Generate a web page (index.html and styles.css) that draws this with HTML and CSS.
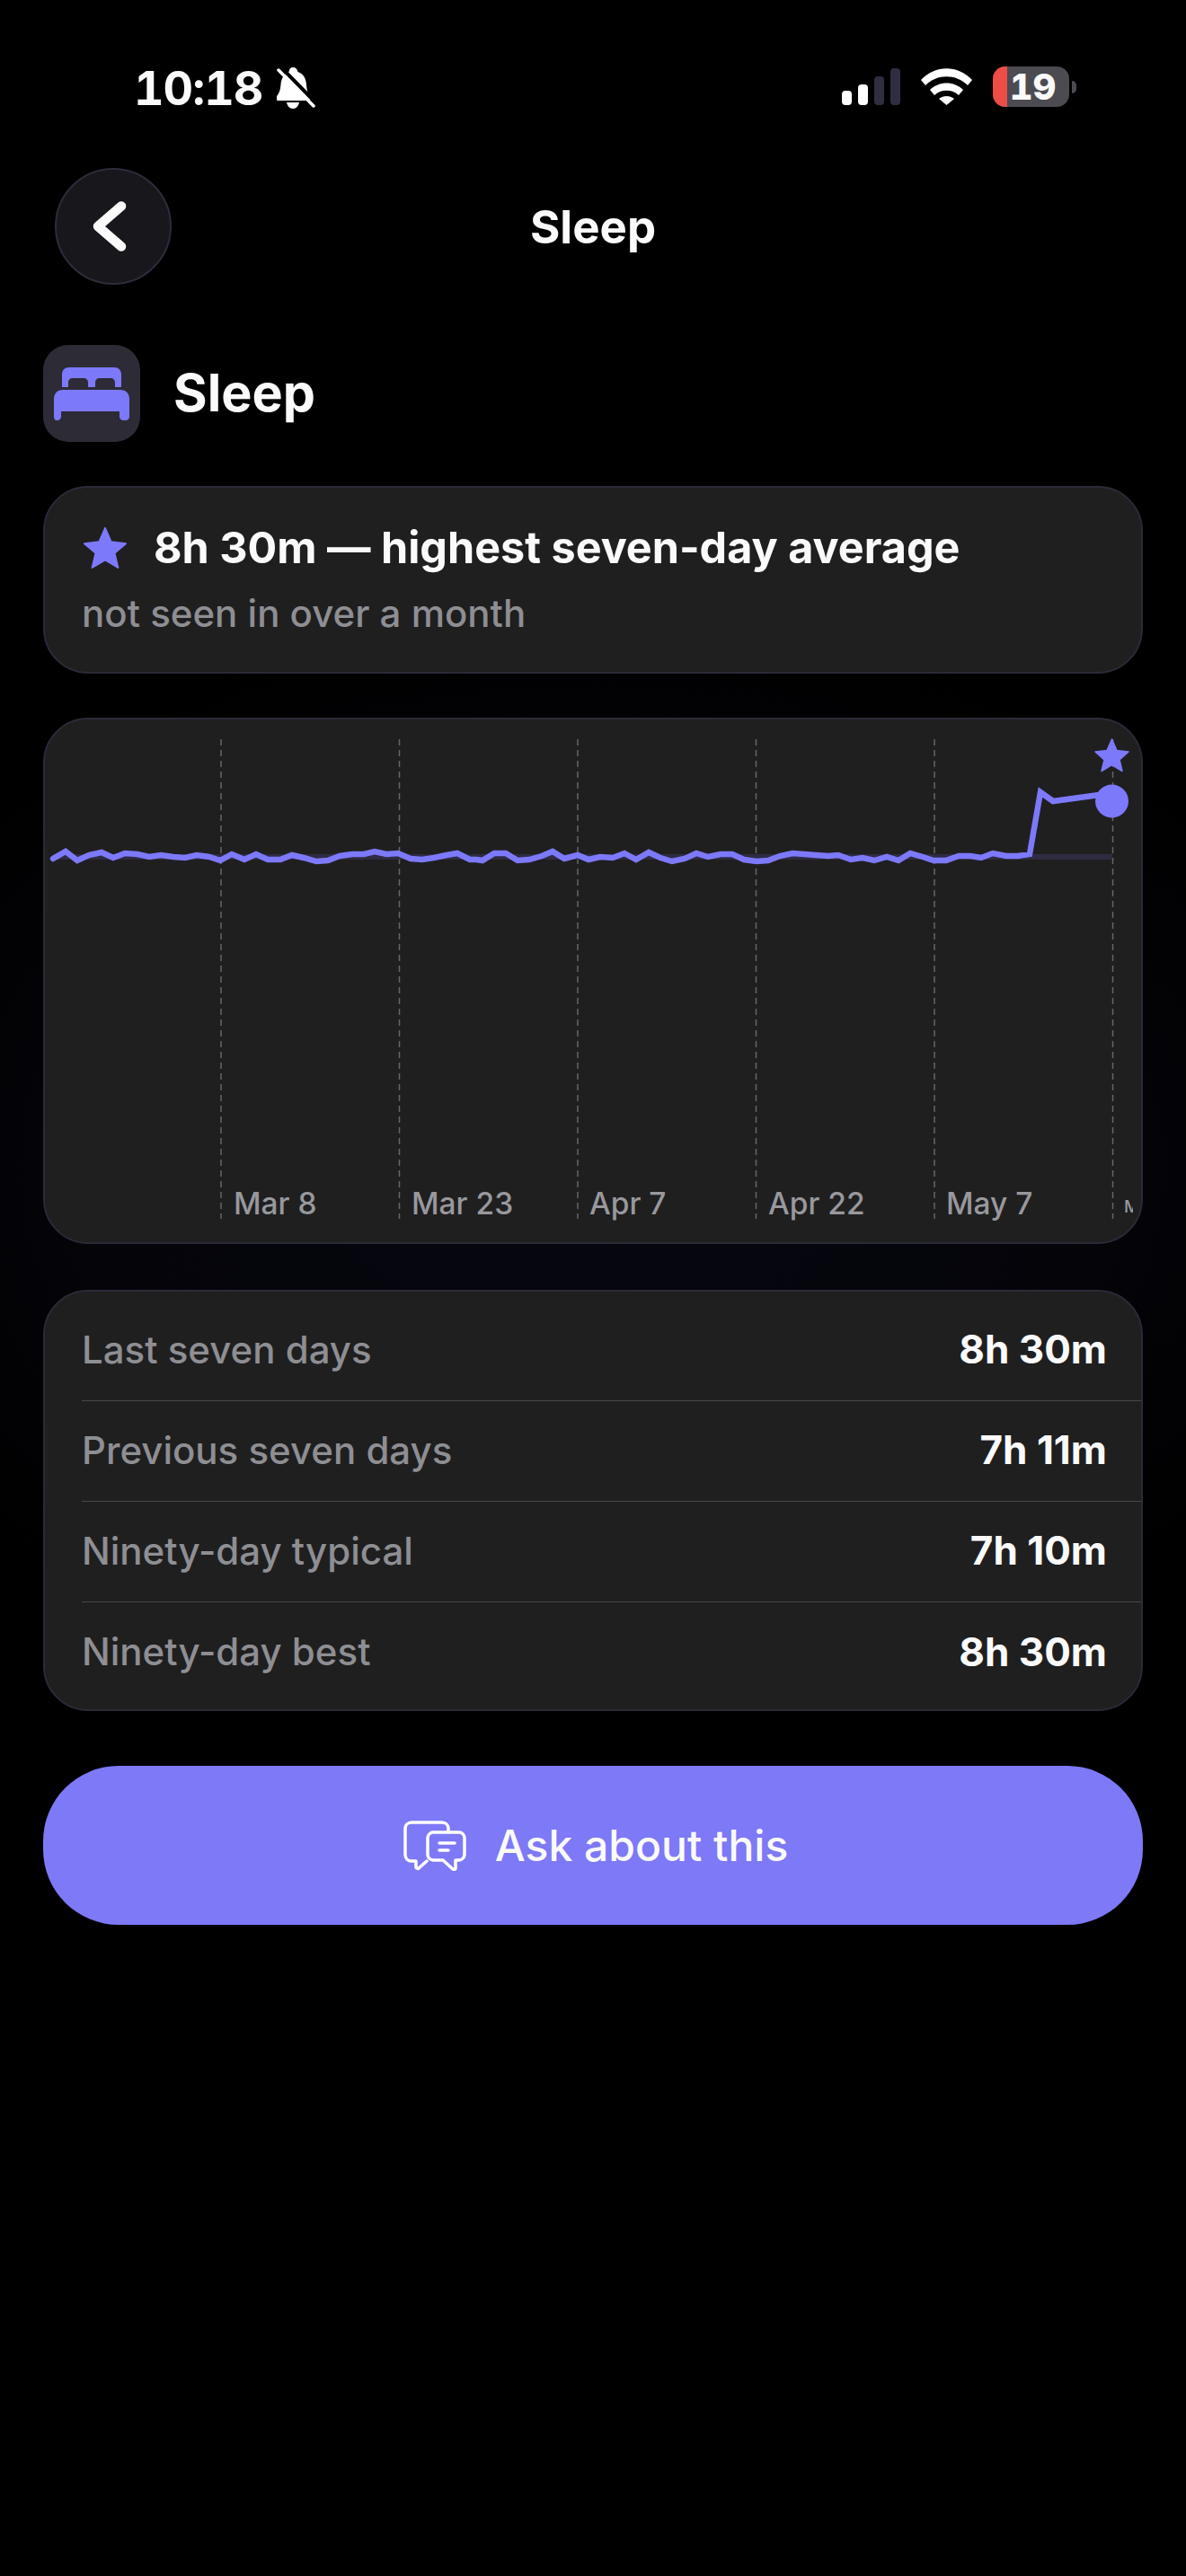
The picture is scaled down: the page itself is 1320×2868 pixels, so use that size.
FILE: index.html
```html
<!DOCTYPE html>
<html lang="en">
<head>
    <meta charset="UTF-8">
    <meta name="viewport" content="width=device-width, initial-scale=1.0">
    <title>Sleep</title>
    <link rel="stylesheet" href="styles.css">
</head>
<body>
    <div class="status-bar">
        <div class="status-left">
            <span class="status-time">10:18</span>
            <svg class="bell" viewBox="0 0 43 46">
                <path d="M18 0c3 0 5 2 5.500 5 6 2 9 7 9.500 14 .5 7 2 11 4 13 2 2 1 5-2 5H2c-3 0-4-3-2-5 2-2 4-6 4.500-13 .5-7 4-12 9-14C14 2 15 0 18 0z" fill="#fff"/>
                <path d="M11 39h14c-1 4-3 7-7 7s-6-3-7-7z" fill="#fff"/>
                <path d="M5 0l39 40" stroke="#000" stroke-width="4"/>
                <path d="M2 3l39 40" stroke="#fff" stroke-width="3.500" stroke-linecap="round"/>
            </svg>
        </div>
        <div class="status-right">
            <div class="signal">
                <span class="bar bar-1"></span>
                <span class="bar bar-2"></span>
                <span class="bar bar-3"></span>
                <span class="bar bar-4"></span>
            </div>
            <svg class="wifi" viewBox="0 0 57 41">
                <path d="M0 13C16-4 41-4 57 13l-5 6C39 6 18 6 5 19z" fill="#fff"/>
                <path d="M10 24c10-10 27-10 37 0l-5 6c-7-7-20-7-27 0z" fill="#fff"/>
                <path d="M20 34c5-4 12-4 17 0l-8.500 7z" fill="#fff"/>
            </svg>
            <div class="battery">
                <div class="battery-body">
                    <span class="battery-fill"></span>
                    <span class="battery-level">19</span>
                </div>
                <span class="battery-nub"></span>
            </div>
        </div>
    </div>

    <div class="nav">
        <button class="back-btn" type="button">
            <svg viewBox="0 0 38 56" class="back-icon">
                <path d="M32 5.500L6 28l26 22.500" fill="none" stroke="#fafafa" stroke-width="10.500" stroke-linecap="round" stroke-linejoin="round"/>
            </svg>
        </button>
        <span class="nav-title">Sleep</span>
    </div>

    <main class="content">
        <div class="metric-head">
            <div class="metric-tile">
                <svg class="bed" viewBox="0 0 84 60">
                    <path d="M9 23V9c0-5 3-8 8-8h50c5 0 8 3 8 8v14H68v-5c0-3-2-5-5-5H51c-3 0-5 2-5 5v5h-8v-5c0-3-2-5-5-5H21c-3 0-5 2-5 5v5z" fill="#7d79fb"/>
                    <path d="M10 26h64c6 0 10 4 10 10v20c0 2-2 4-4 4h-3c-2 0-4-2-4-4v-6H8v6c0 2-2 4-4 4H3c-2 0-3-2-3-4V36c0-6 4-10 10-10z" fill="#7d79fb"/>
                </svg>
            </div>
            <h1>Sleep</h1>
        </div>

        <section class="card highlight">
            <div class="highlight-title">
                <svg class="star" viewBox="0 0 50 48">
                    <path d="M25 1l7 16 17 2-13 11 4 17-15-9-15 9 4-17L1 19l17-2z" fill="#7d79fb" stroke="#7d79fb" stroke-width="2" stroke-linejoin="round"/>
                </svg>
                <span>8h 30m — highest seven-day average</span>
            </div>
            <p class="highlight-sub">not seen in over a month</p>
        </section>

        <section class="card chart-card">
            <svg class="chart" viewBox="48 799 1213 586" width="1213" height="586">
                <g class="gridlines">
                    <line x1="246" y1="823" x2="246" y2="1357"/>
                    <line x1="444.500" y1="823" x2="444.500" y2="1357"/>
                    <line x1="643" y1="823" x2="643" y2="1357"/>
                    <line x1="841.500" y1="823" x2="841.500" y2="1357"/>
                    <line x1="1040" y1="823" x2="1040" y2="1357"/>
                    <line x1="1238.500" y1="823" x2="1238.500" y2="1357"/>
                </g>
                <line class="baseline" x1="59" y1="954" x2="1238" y2="954"/>
                <polyline class="trend" points="59,956 73,948 86,958 99,952 113,949 126,955 139,950 153,951 166,954 179,952 193,954 206,955 219,952 233,954 245,958 258,951 272,957 285,951 298,957 312,957 325,952 338,955 352,959 365,958 378,953 392,951 405,951 417,948 430,951 443,950 457,956 470,957 483,955 497,952 509,950 523,957 530,957 537,958 550,950 563,950 576,958 589,957 603,953 615,948 628,956 643,952 655,957 668,954 682,955 695,950 708,957 722,949 735,955 748,959 762,956 775,950 788,954 802,951 815,951 828,957 842,959 855,958 868,953 882,950 895,951 908,952 922,953 933,952 947,957 960,955 973,958 987,954 1000,958 1013,950 1027,954 1039,958 1053,958 1067,953 1080,953 1092,955 1105,950 1120,953 1133,953 1146,951 1158,882 1172,892 1238,883"/>
                <circle class="marker" cx="1237.500" cy="892" r="18.500"/>
                <path class="marker" d="M1237.500 823l5.500 12.500 13 1.500-10 9 3 12.500-11.500-7-11.500 7 3-12.500-10-9 13-1.500z" stroke="#7d79fb" stroke-width="1.500" stroke-linejoin="round"/>
                <g class="axis-labels">
                    <text x="260" y="1352">Mar 8</text>
                    <text x="458" y="1352">Mar 23</text>
                    <text x="656" y="1352">Apr 7</text>
                    <text x="855" y="1352">Apr 22</text>
                    <text x="1053" y="1352">May 7</text>
                    <text class="axis-clipped" x="1251" y="1350">M</text>
                </g>
            </svg>
        </section>

        <section class="card stats">
            <div class="stat-row">
                <span class="stat-label">Last seven days</span>
                <span class="stat-value">8h 30m</span>
            </div>
            <div class="stat-row">
                <span class="stat-label">Previous seven days</span>
                <span class="stat-value">7h 11m</span>
            </div>
            <div class="stat-row">
                <span class="stat-label">Ninety-day typical</span>
                <span class="stat-value">7h 10m</span>
            </div>
            <div class="stat-row">
                <span class="stat-label">Ninety-day best</span>
                <span class="stat-value">8h 30m</span>
            </div>
        </section>

        <button class="ask-btn" type="button">
            <svg class="chat-icon" viewBox="0 0 70 56">
                <path d="M26 45l-9 8c-1 1-3 0-3-1v-7H9c-4 0-7-3-7-7V9c0-4 3-7 7-7h34c4 0 7 3 7 7v4" fill="none" stroke="#fff" stroke-width="3.500" stroke-linecap="round" stroke-linejoin="round"/>
                <path d="M33 13h29c3 0 6 3 6 6v19c0 3-3 6-6 6h-4v9c0 1-1 2-3 1L44 44H33c-3 0-6-3-6-6V19c0-3 3-6 6-6z" fill="none" stroke="#fff" stroke-width="3.500" stroke-linejoin="round"/>
                <path d="M40 25h17M40 33h10" stroke="#fff" stroke-width="3.500" stroke-linecap="round"/>
            </svg>
            <span>Ask about this</span>
        </button>
    </main>
</body>
</html>
```

FILE: styles.css
```css
* {
    margin: 0;
    padding: 0;
    box-sizing: border-box;
}

body {
    width: 1320px;
    height: 2868px;
    overflow: hidden;
    font-family: "Inter", "Liberation Sans", sans-serif;
    color: #fafafa;
    background: radial-gradient(ellipse 900px 620px at 50% 1300px, #070712 0%, #040409 65%, #000 100%) #000;
}

/* Status bar */
.status-bar {
    height: 187px;
    padding: 74px 122px 0 149px;
    display: flex;
    justify-content: space-between;
    align-items: flex-start;
}

.status-left {
    display: flex;
    align-items: flex-start;
    gap: 15px;
}

.status-time {
    width: 144px;
    font-size: 52px;
    font-weight: 700;
    line-height: 50px;
    letter-spacing: -1px;
    font-variant-numeric: tabular-nums;
    white-space: nowrap;
}

.bell {
    width: 43px;
    height: 46px;
    margin-top: 1px;
}

.status-right {
    display: flex;
    align-items: flex-start;
}

.signal {
    display: flex;
    align-items: flex-end;
    gap: 7px;
    height: 41px;
    margin-top: 2px;
}

.bar {
    width: 11px;
    border-radius: 4px;
    background: #fff;
}

.bar-1 { height: 16px; }
.bar-2 { height: 23px; }
.bar-3 { height: 32px; background: #2f2e41; }
.bar-4 { height: 41px; background: #2f2e41; }

.wifi {
    width: 57px;
    height: 41px;
    margin: 2px 23px 0;
}

.battery {
    display: flex;
    align-items: center;
    gap: 3px;
}

.battery-body {
    position: relative;
    width: 85px;
    height: 45px;
    border-radius: 14px;
    background: #4c4b52;
    display: flex;
    align-items: center;
    justify-content: center;
}

.battery-fill {
    position: absolute;
    left: 0;
    top: 0;
    bottom: 0;
    width: 16px;
    border-radius: 14px 0 0 14px;
    background: #ee4d47;
}

.battery-level {
    position: relative;
    font-size: 40px;
    font-weight: 800;
    line-height: 45px;
    margin-left: 4px;
    color: #fafafa;
    font-variant-numeric: tabular-nums;
}

.battery-nub {
    width: 5px;
    height: 14px;
    border-radius: 0 5px 5px 0;
    background: #4c4b52;
}

/* Nav */
.nav {
    position: relative;
    height: 130px;
    padding-left: 61px;
    display: flex;
    align-items: center;
}

.back-btn {
    width: 130px;
    height: 130px;
    border-radius: 50%;
    border: 2px solid #2d2c3a;
    background: #17171c;
    display: flex;
    align-items: center;
    justify-content: center;
}

.back-icon {
    width: 38px;
    height: 56px;
    margin-right: 9px;
}

.nav-title {
    position: absolute;
    left: 0;
    right: 0;
    text-align: center;
    font-size: 51px;
    font-weight: 700;
}

/* Main column */
.content {
    padding: 67px 48px 0;
}

.metric-head {
    display: flex;
    align-items: center;
    gap: 37px;
    margin-bottom: 49px;
}

.metric-tile {
    width: 108px;
    height: 108px;
    border-radius: 28px;
    background: #2c2b36;
    display: flex;
    align-items: center;
    justify-content: center;
}

.bed {
    width: 84px;
    height: 60px;
}

h1 {
    font-size: 57.500px;
    font-weight: 700;
    padding-bottom: 2px;
}

.card {
    width: 1224px;
    border: 2px solid #2b2a38;
    border-radius: 50px;
    background: #1f1f20;
}

.highlight {
    height: 209px;
    padding: 38px 40px 0 41px;
    margin-bottom: 49px;
}

.highlight-title {
    display: flex;
    align-items: center;
    gap: 30px;
    font-size: 48.500px;
    font-weight: 700;
    line-height: 58px;
}

.star {
    width: 48px;
    height: 46px;
    margin-left: 2px;
}

.highlight-sub {
    margin-top: 19px;
    font-size: 42px;
    font-weight: 500;
    line-height: 50px;
    color: #8e8e93;
}

.chart-card {
    height: 586px;
    margin-bottom: 51px;
    overflow: hidden;
}

.chart {
    display: block;
    margin: -2px 0 0 -2px;
}

.gridlines line {
    stroke: #66666b;
    stroke-width: 1.500;
    stroke-dasharray: 7 5;
}

.baseline {
    stroke: #2e2c42;
    stroke-width: 6;
}

.trend {
    fill: none;
    stroke: #7d79fb;
    stroke-width: 6.500;
    stroke-linecap: round;
    stroke-linejoin: miter;
}

.marker {
    fill: #7d79fb;
}

.axis-labels text {
    font-size: 33.500px;
    font-weight: 500;
    fill: #98989d;
}

.axis-labels .axis-clipped {
    font-size: 19px;
}

.stats {
    height: 469px;
    padding: 10px 0 0 41px;
    margin-bottom: 61px;
}

.stat-row {
    height: 112px;
    padding: 0 38px 3px 0;
    display: flex;
    align-items: center;
    justify-content: space-between;
    border-bottom: 1px solid #48484c;
}

.stat-row:last-child {
    border-bottom: none;
}

.stat-label {
    font-size: 42px;
    font-weight: 500;
    color: #8e8e93;
}

.stat-value {
    font-size: 44px;
    font-weight: 700;
}

.ask-btn {
    width: 1224px;
    height: 177px;
    border: none;
    border-radius: 84px;
    padding-left: 6px;
    background: #7d79f7;
    color: #fafafa;
    font-family: inherit;
    font-size: 48px;
    font-weight: 500;
    display: flex;
    align-items: center;
    justify-content: center;
    gap: 32px;
}

.chat-icon {
    width: 70px;
    height: 56px;
}
```
